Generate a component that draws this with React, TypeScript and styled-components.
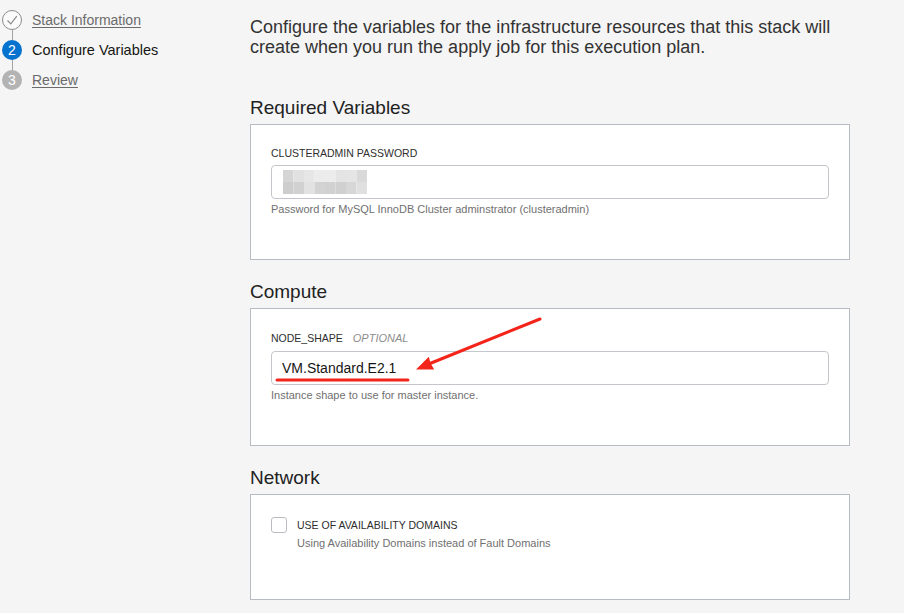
import React from "react";
import styled, { createGlobalStyle } from "styled-components";

const GlobalStyle = createGlobalStyle`
  html, body {
    margin: 0;
    padding: 0;
    background: #f5f5f5;
    overflow: hidden;
  }
  body {
    font-family: "Liberation Sans", Arial, Helvetica, sans-serif;
    color: #222;
  }
`;

const Page = styled.div`
  position: relative;
  display: flex;
  width: 904px;
  min-height: 613px;
  background: #f5f5f5;
`;

const Sidebar = styled.nav`
  width: 250px;
  flex: 0 0 250px;
  padding: 5px 0 0 2px;
  box-sizing: border-box;
`;

const StepList = styled.ol`
  list-style: none;
  margin: 0;
  padding: 0;
  display: flex;
  flex-direction: column;
`;

const StepRow = styled.li`
  display: flex;
  align-items: center;
  gap: 10px;
  height: 30px;
`;

const MarkerCol = styled.div`
  display: flex;
  flex-direction: column;
  align-items: center;
  width: 20px;
  height: 30px;
`;

const Connector = styled.div<{ $hidden?: boolean }>`
  width: 1px;
  height: 5px;
  background: ${(p) => (p.$hidden ? "transparent" : "#a3a3a3")};
`;

type StepState = "done" | "current" | "todo";

const Marker = styled.div<{ $state: StepState }>`
  width: 20px;
  height: 20px;
  border-radius: 50%;
  box-sizing: border-box;
  display: flex;
  align-items: center;
  justify-content: center;
  font-size: 14px;
  line-height: 1;
  color: #fff;
  background: ${(p) =>
    p.$state === "current" ? "#0572ce" : p.$state === "todo" ? "#b3b3b3" : "#fbfbfb"};
  border: ${(p) => (p.$state === "done" ? "1px solid #8a8a8a" : "none")};
`;

const StepLabel = styled.span<{ $state: StepState }>`
  font-size: ${(p) => (p.$state === "current" ? "14.5px" : "14px")};
  line-height: 16px;
  color: ${(p) => (p.$state === "current" ? "#161513" : "#6b6b6b")};
  text-decoration: ${(p) => (p.$state === "current" ? "none" : "underline")};
  text-underline-offset: 2px;
`;

const Main = styled.main`
  width: 600px;
  padding-top: 18px;
  display: flex;
  flex-direction: column;
`;

const Intro = styled.p`
  margin: 0 0 40px;
  font-size: 18px;
  line-height: 19.5px;
  color: #333;
`;

const Section = styled.section`
  display: flex;
  flex-direction: column;
  & + & {
    margin-top: 21px;
  }
`;

const SectionTitle = styled.h2`
  margin: 0 0 5px;
  font-size: 19px;
  line-height: 22px;
  font-weight: normal;
  color: #222;
`;

const Panel = styled.div<{ $padBottom?: number }>`
  background: #fff;
  border: 1px solid #b6bcc2;
  padding: 22px 20px ${(p) => p.$padBottom ?? 44}px;
  display: flex;
  flex-direction: column;
`;

const LabelRow = styled.div`
  display: flex;
  align-items: center;
  gap: 10px;
  min-height: 12px;
  margin-bottom: 6px;
`;

const Label = styled.label`
  font-size: 10.5px;
  line-height: 12px;
  color: #2e2e2e;
  text-transform: uppercase;
`;

const Optional = styled.span`
  font-size: 11px;
  line-height: 14px;
  font-style: italic;
  color: #8d8d8d;
`;

const InputBox = styled.div`
  height: 34px;
  box-sizing: border-box;
  border: 1px solid #c3c7cb;
  border-radius: 4px;
  background: #fff;
  display: flex;
  align-items: center;
  padding-left: 11px;
`;

const TextInput = styled.input`
  height: 34px;
  box-sizing: border-box;
  border: 1px solid #c3c7cb;
  border-radius: 4px;
  background: #fff;
  padding: 0 10px;
  font-family: "Liberation Sans", Arial, Helvetica, sans-serif;
  font-size: 14px;
  color: #161513;
  outline: none;
  width: 100%;
`;

const Help = styled.div<{ $indent?: number }>`
  margin-top: 4px;
  margin-left: ${(p) => p.$indent ?? 0}px;
  font-size: 11px;
  line-height: 12px;
  color: #707070;
`;

const CheckRow = styled.div`
  display: flex;
  align-items: center;
  gap: 10px;
`;

const CheckBox = styled.span`
  width: 16px;
  height: 16px;
  box-sizing: border-box;
  border: 1px solid #b9bdc1;
  border-radius: 3px;
  background: #fff;
  flex: 0 0 16px;
`;

const CheckLabel = styled.span`
  font-size: 10.5px;
  line-height: 12px;
  color: #2e2e2e;
`;

const Annotation = styled.svg`
  position: absolute;
  left: 0;
  top: 0;
  width: 904px;
  height: 613px;
  pointer-events: none;
`;

const mosaicTop = ["#d5d5d5", "#e1e1e1", "#e6e6e6", "#ececec", "#ececec", "#e4e4e4", "#e5e5e5", "#d9d9d9"];
const mosaicBottom = ["#cdcdcd", "#d1d1d1", "#e2e2e2", "#d3d3d3", "#d1d1d1", "#d0d0d0", "#d7d7d7", "#e0e0e0"];

function Mosaic() {
  return (
    <svg width="84" height="24" viewBox="0 0 84 24" aria-hidden="true">
      {mosaicTop.map((c, i) => (
        <rect key={"t" + i} x={i * 10.5} y={0} width={10.5} height={12} fill={c} />
      ))}
      {mosaicBottom.map((c, i) => (
        <rect key={"b" + i} x={i * 10.5} y={12} width={10.5} height={12} fill={c} />
      ))}
    </svg>
  );
}

function CheckIcon() {
  return (
    <svg width="16" height="16" viewBox="0 0 16 16" aria-hidden="true">
      <polyline points="3.5,8.5 6.8,11.8 12.8,4.2" fill="none" stroke="#8a8a8a" strokeWidth="1.2" />
    </svg>
  );
}

const steps: { label: string; state: StepState; n: number }[] = [
  { label: "Stack Information", state: "done", n: 1 },
  { label: "Configure Variables", state: "current", n: 2 },
  { label: "Review", state: "todo", n: 3 },
];

export default function App() {
  return (
    <>
      <GlobalStyle />
      <Page>
        <Sidebar>
          <StepList>
            {steps.map((s, i) => (
              <StepRow key={s.label}>
                <MarkerCol>
                  <Connector $hidden={i === 0} />
                  <Marker $state={s.state}>
                    {s.state === "done" ? <CheckIcon /> : s.n}
                  </Marker>
                  <Connector $hidden={i === steps.length - 1} />
                </MarkerCol>
                <StepLabel $state={s.state}>{s.label}</StepLabel>
              </StepRow>
            ))}
          </StepList>
        </Sidebar>
        <Main>
          <Intro>
            Configure the variables for the infrastructure resources that this stack will
            <br />
            create when you run the apply job for this execution plan.
          </Intro>

          <Section>
            <SectionTitle>Required Variables</SectionTitle>
            <Panel>
              <LabelRow>
                <Label>CLUSTERADMIN PASSWORD</Label>
              </LabelRow>
              <InputBox>
                <Mosaic />
              </InputBox>
              <Help>Password for MySQL InnoDB Cluster adminstrator (clusteradmin)</Help>
            </Panel>
          </Section>

          <Section>
            <SectionTitle>Compute</SectionTitle>
            <Panel>
              <LabelRow>
                <Label>NODE_SHAPE</Label>
                <Optional>OPTIONAL</Optional>
              </LabelRow>
              <TextInput readOnly value="VM.Standard.E2.1" />
              <Help>Instance shape to use for master instance.</Help>
            </Panel>
          </Section>

          <Section>
            <SectionTitle>Network</SectionTitle>
            <Panel $padBottom={50}>
              <CheckRow>
                <CheckBox />
                <CheckLabel>USE OF AVAILABILITY DOMAINS</CheckLabel>
              </CheckRow>
              <Help $indent={26}>Using Availability Domains instead of Fault Domains</Help>
            </Panel>
          </Section>
        </Main>
        <Annotation viewBox="0 0 904 613" aria-hidden="true">
          <line x1="540" y1="319" x2="430" y2="363.5" stroke="#f3241a" strokeWidth="3" strokeLinecap="round" />
          <polygon points="416,369.5 428.8,356.8 430.5,363.2 434.2,369.4" fill="#f3241a" />
          <line x1="277" y1="380" x2="408" y2="380" stroke="#f3241a" strokeWidth="3" strokeLinecap="round" />
        </Annotation>
      </Page>
    </>
  );
}
